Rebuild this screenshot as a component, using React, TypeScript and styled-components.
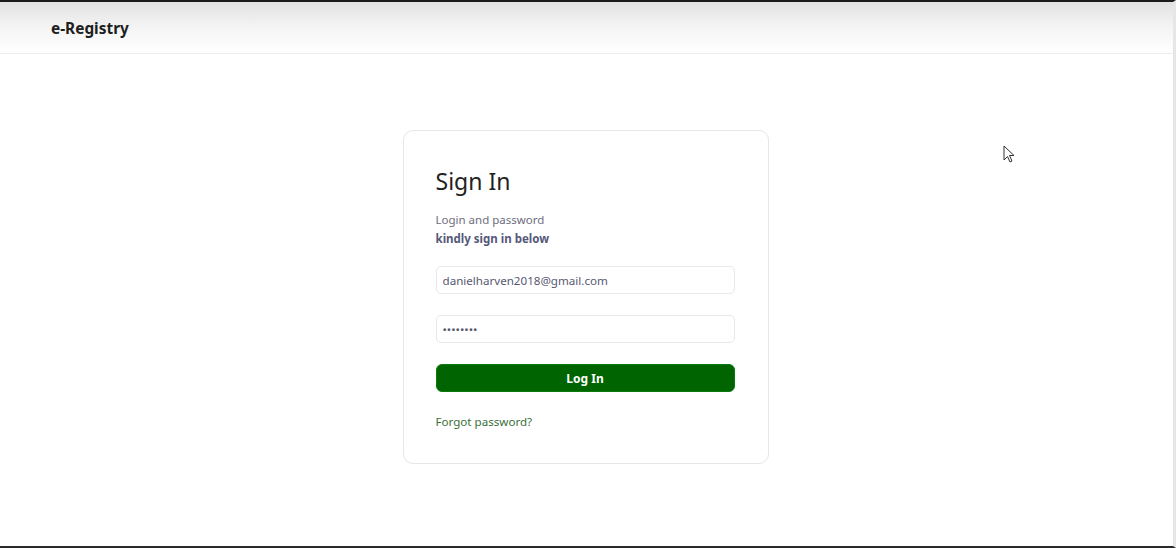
import React from "react";
import styled, { createGlobalStyle } from "styled-components";

const Global = createGlobalStyle`
  html, body { margin: 0; padding: 0; background: #fff; }
  body { font-family: "Noto Sans", "Open Sans", sans-serif; }
  * { box-sizing: border-box; }
`;

const Frame = styled.div`
  position: relative;
  width: 1176px;
  height: 548px;
  border-top: 2px solid #1c1c1c;
  border-bottom: 2px solid #2a2a2a;
  border-right: 3px solid #e6e6e6;
  display: flex;
  flex-direction: column;
  overflow: hidden;
`;

const Header = styled.header`
  height: 52px;
  flex: none;
  display: flex;
  align-items: center;
  padding-left: 51px;
  background: linear-gradient(to bottom, #e2e2e2 0%, #f4f4f4 50%, #ffffff 100%);
  border-bottom: 1px solid #ececec;
`;

const Brand = styled.div`
  font-size: 15.4px;
  font-weight: 700;
  color: #1e1e1e;
  margin-top: 1px;
`;

const Main = styled.main`
  flex: 1;
  display: flex;
  justify-content: center;
  align-items: flex-start;
  padding-top: 76px;
  padding-right: 2px;
`;

const Card = styled.section`
  width: 366px;
  height: 334px;
  border: 1px solid #e6e6e6;
  border-radius: 10px;
  background: #fff;
  padding: 34px 32px 0 32px;
  display: flex;
  flex-direction: column;
`;

const Title = styled.h1`
  margin: 0;
  font-size: 23px;
  font-weight: 400;
  color: #222;
  line-height: 32px;
`;

const Sub = styled.p`
  margin: 13px 0 0 0;
  font-size: 11.5px;
  line-height: 19px;
  color: #6d6d80;
`;

const SubBold = styled.strong`
  display: block;
  font-weight: 700;
  color: #55587a;
`;

const Field = styled.input`
  width: 299px;
  height: 28px;
  border: 1px solid #e8e8ec;
  border-radius: 5px;
  padding: 0 6px;
  font-family: inherit;
  font-size: 11.6px;
  color: #575870;
  background: #fff;
  outline: none;
  margin-top: ${(p: { $gap: number }) => p.$gap}px;
`;

const Button = styled.button`
  width: 299px;
  height: 28px;
  margin-top: 21px;
  border: 1px solid #0a7a0a;
  border-radius: 6px;
  background: #006400;
  color: #fff;
  font-family: inherit;
  font-size: 12px;
  font-weight: 700;
  cursor: pointer;
`;

const Forgot = styled.a`
  margin-top: 22px;
  font-size: 11.6px;
  color: #3a6f3a;
  text-decoration: none;
`;

const Cursor = styled.svg`
  position: absolute;
  left: 1003px;
  top: 143px;
`;

export default function App() {
  return (
    <>
      <Global />
      <Frame>
        <Header>
          <Brand>e-Registry</Brand>
        </Header>
        <Main>
          <Card>
            <Title>Sign In</Title>
            <Sub>
              Login and password
              <SubBold>kindly sign in below</SubBold>
            </Sub>
            <Field $gap={18} readOnly value="danielharven2018@gmail.com" />
            <Field $gap={21} readOnly type="password" value="password" />
            <Button>Log In</Button>
            <Forgot href="#">Forgot password?</Forgot>
          </Card>
        </Main>
        <Cursor width="14" height="20" viewBox="0 0 14 20">
          <path d="M1 1 L1 15 L4.5 11.5 L7 17 L9 16 L6.5 10.5 L11 10.5 Z" fill="#fff" stroke="#333" strokeWidth="1" strokeLinejoin="round" />
        </Cursor>
      </Frame>
    </>
  );
}
